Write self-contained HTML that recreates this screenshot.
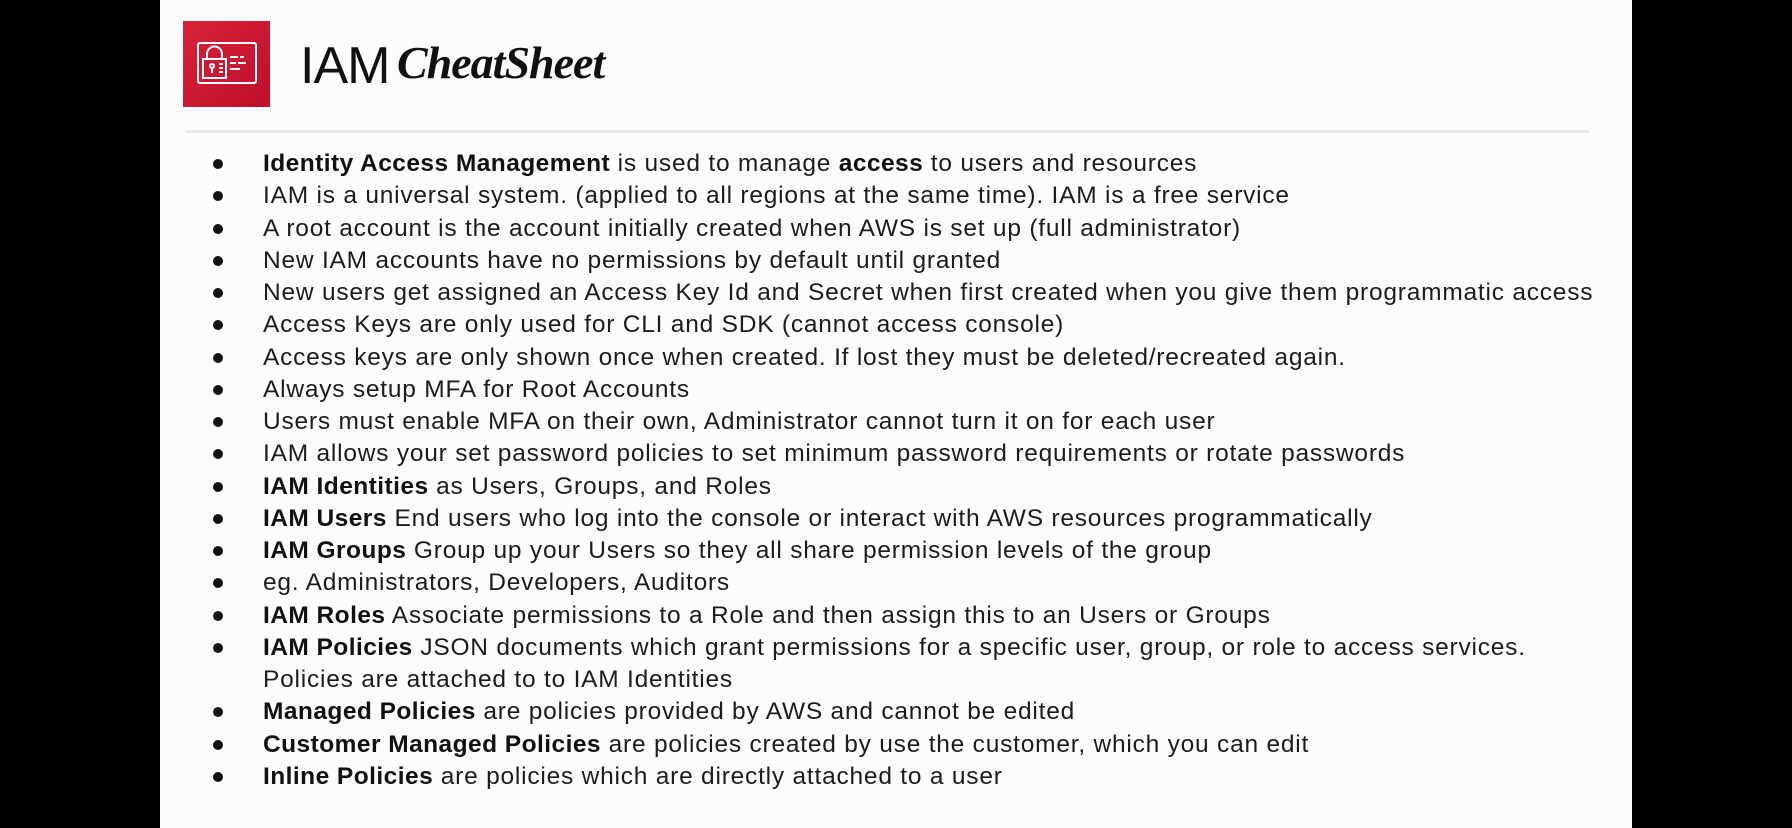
<!DOCTYPE html>
<html><head><meta charset="utf-8"><style>
html,body{margin:0;padding:0;background:#000;}
body{width:1792px;height:828px;position:relative;overflow:hidden;font-family:"Liberation Sans",sans-serif;}
#page{position:absolute;left:160px;top:0;width:1472px;height:828px;background:#fcfcfe;}
.logo{position:absolute;left:183px;top:21px;width:87px;height:86px;background:linear-gradient(135deg,#d8223a,#bd0f2a);}
.t1{position:absolute;left:300px;top:36px;font-size:52px;font-weight:300;color:#111;letter-spacing:-1px;}
.t2{position:absolute;left:397px;top:36px;font-size:46px;font-style:italic;font-weight:bold;color:#111;font-family:"Liberation Serif",cursive;letter-spacing:-1px;}
.hr{position:absolute;left:186px;top:130px;width:1403px;height:3px;background:#e9e9ec;}
.row{position:absolute;left:263px;height:32px;line-height:32px;font-size:24.5px;letter-spacing:0.78px;color:#1c1c1c;white-space:nowrap;}
.row b{color:#111;letter-spacing:0.45px;}
.dot{position:absolute;left:213px;width:10px;height:10px;border-radius:50%;background:#111;}
.red{color:#d0101e;}
</style></head><body>
<div id="page"></div>
<div class="logo"><svg width="87" height="86" viewBox="0 0 87 86" fill="none" stroke="#fff" stroke-width="2">
<rect x="15" y="22" width="58" height="40" rx="2"/>
<rect x="20" y="38" width="23" height="19"/>
<path d="M24 38v-5a7.5 7.5 0 0 1 15 0v5"/>
<circle cx="29" cy="45" r="2"/><path d="M29 47v5"/>
<path d="M36 43h4M36 47h4M36 51h4M47 36h8M57 36h4M47 42h6M55 42h8M47 48h10"/>
</svg></div>
<div class="t1">IAM</div>
<div class="t2">CheatSheet</div>
<div class="hr"></div>
<div id="list"></div>
<script>
var L=[
['<b>Identity Access Management</b> is used to manage <b class="red">access</b> to users and resources',1],
['IAM is a universal system. (applied to all regions at the same time). IAM is a free service',1],
['A root account is the account initially created when AWS is set up (full administrator)',1],
['New IAM accounts have no permissions by default until granted',1],
['New users get assigned an Access Key Id and Secret when first created when you give them programmatic access',1],
['Access Keys are only used for CLI and SDK (cannot access console)',1],
['Access keys are only shown once when created. If lost they must be deleted/recreated again.',1],
['Always setup MFA for Root Accounts',1],
['Users must enable MFA on their own, Administrator cannot turn it on for each user',1],
['IAM allows your set password policies to set minimum password requirements or rotate passwords',1],
['<b>IAM Identities</b> as Users, Groups, and Roles',1],
['<b>IAM Users</b> End users who log into the console or interact with AWS resources programmatically',1],
['<b>IAM Groups</b> Group up your Users so they all share permission levels of the group',1],
['eg. Administrators, Developers, Auditors',1],
['<b>IAM Roles</b> Associate permissions to a Role and then assign this to an Users or Groups',1],
['<b>IAM Policies</b> JSON documents which grant permissions for a specific user, group, or role to access services.',1],
['Policies are attached to to IAM Identities',0],
['<b>Managed Policies</b> are policies provided by AWS and cannot be edited',1],
['<b>Customer Managed Policies</b> are policies created by use the customer, which you can edit',1],
['<b>Inline Policies</b> are policies which are directly attached to a user',1]];
var h='';
for(var i=0;i<L.length;i++){var c=164+i*32.26;
h+='<div class="row" style="top:'+(c-16)+'px">'+L[i][0]+'</div>';
if(L[i][1])h+='<div class="dot" style="top:'+(c-5)+'px"></div>';}
document.getElementById('list').innerHTML=h;
</script>
</body></html>
